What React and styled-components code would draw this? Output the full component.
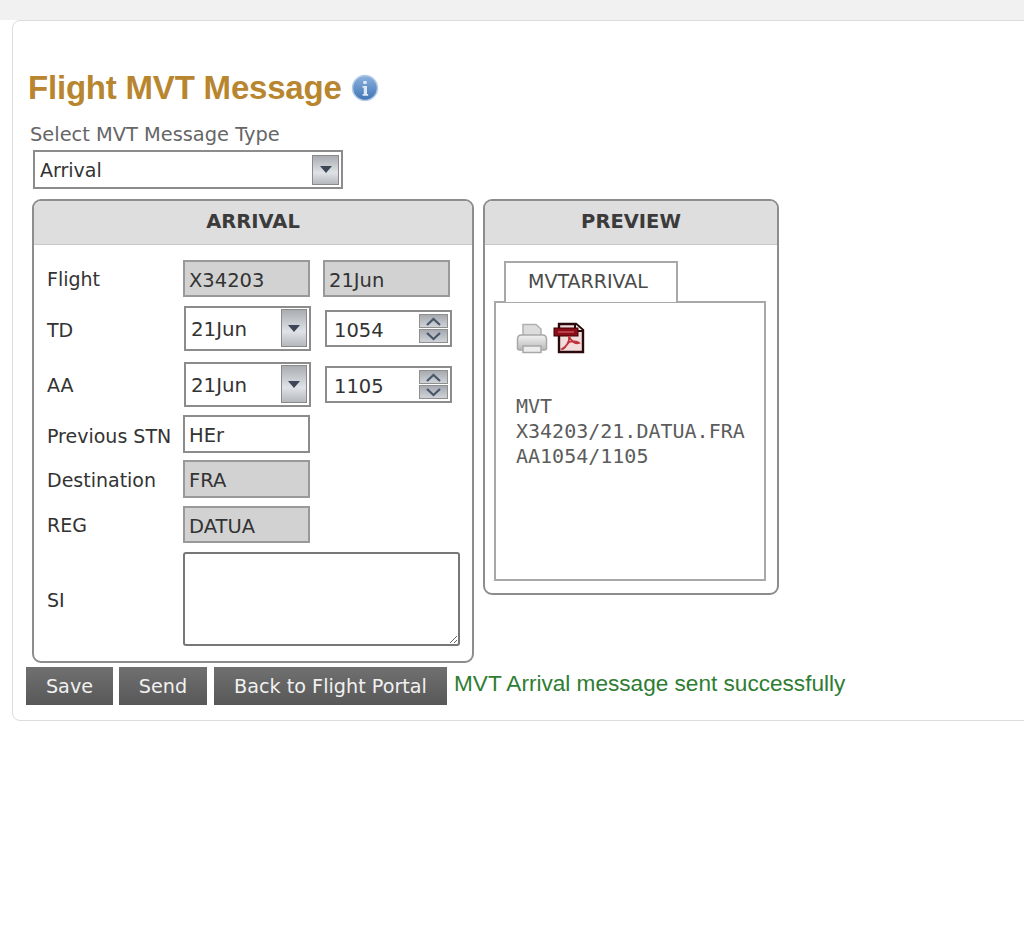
import React from 'react';
import styled, { createGlobalStyle } from 'styled-components';

const GlobalStyle = createGlobalStyle`
  html, body {
    margin: 0;
    padding: 0;
    background: #fff;
    overflow: hidden;
  }
  body {
    font-family: "DejaVu Sans", sans-serif;
    font-size: 19px;
    color: #333;
  }
`;

const TopBand = styled.div`
  height: 20px;
  background: #f1f1f1;
`;

const Page = styled.div`
  width: 1024px;
  height: 925px;
  overflow: hidden;
  background: #fff;
`;

const Card = styled.main`
  box-sizing: border-box;
  width: 1030px;
  height: 701px;
  margin-left: 12px;
  padding: 47px 0 0 14px;
  background: #fff;
  border: 1px solid #dcdcdc;
  border-radius: 8px;
`;

const TitleRow = styled.div`
  display: flex;
  align-items: center;
  gap: 9px;
  height: 40px;
  margin-left: 1px;
`;

const Title = styled.h1`
  margin: 0;
  font: bold 33px "Liberation Sans", Arial, sans-serif;
  letter-spacing: -0.2px;
  color: #b8862f;
`;

const TypeLabel = styled.div`
  margin: 15px 0 0 3px;
  height: 24px;
  line-height: 24px;
  font-size: 19.4px;
  color: #666;
`;

const TypeSelect = styled.div`
  box-sizing: border-box;
  display: flex;
  align-items: center;
  justify-content: space-between;
  width: 310px;
  height: 39px;
  margin: 3px 0 0 6px;
  padding: 3px 2px 2px 5px;
  border: 2px solid #8c8c8c;
  color: #333;
`;

const ArrowButton = styled.span`
  box-sizing: border-box;
  display: flex;
  align-items: center;
  justify-content: center;
  width: ${p => p.$wide ? 27 : 26}px;
  height: 100%;
  margin-top: ${p => p.$wide ? -1 : 0}px;
  border: 1px solid #8a8a8a;
  background: linear-gradient(#a9acb0, #dfe3e8 60%, #b5b8bc);
`;

const Arrow = styled.i`
  width: 0;
  height: 0;
  border-left: 6px solid transparent;
  border-right: 6px solid transparent;
  border-top: 7px solid #3d4655;
`;

const Panels = styled.div`
  display: flex;
  align-items: flex-start;
  gap: 9px;
  margin: 10px 0 0 5px;
`;

const Panel = styled.section`
  box-sizing: border-box;
  width: ${p => p.$width}px;
  height: ${p => p.$height}px;
  border: 2px solid #8d8d8d;
  border-radius: 9px;
  overflow: hidden;
`;

const PanelHeader = styled.header`
  height: 44px;
  line-height: 42px;
  text-align: center;
  font-weight: bold;
  font-size: 19.5px;
  color: #3b3b3b;
  background: #dedede;
  border-bottom: 1px solid #c8c8c8;
  box-sizing: border-box;
`;

const Form = styled.div`
  padding: 15px 0 0 13px;
`;

const Row = styled.div`
  display: flex;
  align-items: center;
  margin-top: ${p => p.$top || 0}px;
`;

const Label = styled.label`
  flex: none;
  width: 136px;
  color: #333;
  position: relative;
  top: ${p => p.$shift ?? 0}px;
`;

const Field = styled.input`
  box-sizing: border-box;
  width: 127px;
  height: ${p => p.$height || 37}px;
  margin-left: ${p => p.$left || 0}px;
  padding: 3px 4px 0;
  border: 2px solid ${p => p.readOnly && p.$grey ? '#999' : '#8c8c8c'};
  border-radius: 0;
  outline: none;
  font: 19.5px "DejaVu Sans", sans-serif;
  color: #333;
  background: ${p => p.$grey ? '#d2d2d2' : '#fff'};
`;

const DateSelect = styled.div`
  box-sizing: border-box;
  display: flex;
  align-items: center;
  justify-content: space-between;
  width: 127px;
  height: 45px;
  margin-left: 1px;
  padding: 1px 2px 2px 5px;
  border: 2px solid #8c8c8c;
  font-size: 19.8px;
  color: #333;
`;

const DateValue = styled.span`
  padding-top: 3px;
`;

const TimeField = styled.div`
  box-sizing: border-box;
  display: flex;
  align-items: center;
  justify-content: space-between;
  width: 127px;
  height: 37px;
  margin-left: 14px;
  padding: 2px 2px 2px 7px;
  border: 2px solid #8c8c8c;
  font-size: 19.5px;
  color: #333;
`;

const TimeValue = styled.span`
  padding-top: 3px;
`;

const Spinner = styled.span`
  display: flex;
  flex-direction: column;
  gap: 1px;
  width: 29px;
  height: 29px;
`;

const SpinButton = styled.span`
  flex: 1;
  display: flex;
  align-items: center;
  justify-content: center;
  background: linear-gradient(#a6aab0, #cfd3d8);
  border: 1px solid #8f8f8f;
`;

const Remarks = styled.textarea`
  box-sizing: border-box;
  display: block;
  width: 277px;
  height: 94px;
  padding: 4px;
  border: 2px solid #777;
  border-radius: 3px;
  outline: none;
  background: #fff;
`;

const TabArea = styled.div`
  padding: 16px 11px 0 9px;
`;

const Tab = styled.div`
  box-sizing: border-box;
  width: 174px;
  height: 41px;
  margin: 0 0 -1px 10px;
  line-height: 36px;
  padding-left: 22px;
  border: 2px solid #a8a8a8;
  border-bottom: none;
  background: #fff;
  color: #4a4a4a;
  position: relative;
  z-index: 1;
`;

const TabBody = styled.div`
  box-sizing: border-box;
  height: 280px;
  padding: 19px 0 0 20px;
  border: 2px solid #a8a8a8;
`;

const IconRow = styled.div`
  display: flex;
  align-items: center;
  gap: 5px;
  height: 32px;
`;

const Preview = styled.pre`
  margin: 40px 0 0;
  font: 20px/25px "DejaVu Sans Mono", monospace;
  color: #5c5c5c;
`;

const Actions = styled.div`
  display: flex;
  align-items: center;
  margin: 4px 0 0 -1px;
`;

const Button = styled.button`
  box-sizing: border-box;
  height: 38px;
  width: ${p => p.$width}px;
  margin-right: ${p => p.$right || 0}px;
  padding: 0;
  border: none;
  background: linear-gradient(#707070, #585858);
  color: #f1f1f1;
  font: 19.2px "DejaVu Sans", sans-serif;
`;

const Status = styled.span`
  margin: -5px 0 0 7px;
  font: 22.6px "Liberation Sans", Arial, sans-serif;
  color: #2e7d32;
`;

function InfoIcon() {
  return (
    <svg width="28" height="28" viewBox="0 0 28 28">
      <defs>
        <linearGradient id="info" x1="0" y1="0" x2="0" y2="1">
          <stop offset="0" stopColor="#8db2de" />
          <stop offset="1" stopColor="#3f74b5" />
        </linearGradient>
      </defs>
      <circle cx="14" cy="14" r="12.5" fill="url(#info)" stroke="#b5cbe6" strokeWidth="1.5" />
      <rect x="12.2" y="7" width="3.6" height="3" rx="1" fill="#dfe9f5" />
      <path d="M11.5 12h4.5v8h1.2v1.8h-5.6V20h1.2v-6.2h-1.3z" fill="#dfe9f5" />
    </svg>
  );
}

function PrinterIcon() {
  return (
    <svg width="32" height="32" viewBox="0 0 32 32">
      <defs>
        <linearGradient id="printer" x1="0" y1="0" x2="0" y2="1">
          <stop offset="0" stopColor="#f2f2f2" />
          <stop offset="1" stopColor="#b9b9b9" />
        </linearGradient>
      </defs>
      <path d="M7 15V2.5h13l5 4.5v8z" fill="#dcdcdc" stroke="#b0b0b0" strokeWidth="1.5" />
      <path d="M1.5 17q0-4 4-4h21q4 0 4 4v9q0 2-2 2h-25q-2 0-2-2z" fill="url(#printer)" stroke="#a8a8a8" strokeWidth="1.5" />
      <path d="M7 24h18v6.5H7z" fill="#ececec" stroke="#a8a8a8" strokeWidth="1.5" />
    </svg>
  );
}

function PdfIcon() {
  return (
    <svg width="32" height="32" viewBox="0 0 32 32">
      <path d="M6 2h17l7 6v22H6z" fill="#f3dcdc" stroke="#2a0a0c" strokeWidth="2.4" />
      <path d="M22 2v7h8" fill="#fff" stroke="#2a0a0c" strokeWidth="2" />
      <rect x="1" y="6" width="24" height="8" fill="#8d0d18" stroke="#3c0509" />
      <path d="M5 10h16" stroke="#c9505a" strokeWidth="1.5" />
      <path d="M16 14c1 6-3 11-7 13 2 1 4-4 7-7 3-1 8-1 10 1-3 1-8-1-10-7z" fill="none" stroke="#c0323c" strokeWidth="1.8" />
    </svg>
  );
}

function SpinArrow({ up }) {
  return (
    <svg width="17" height="9" viewBox="0 0 17 9">
      <path d={up ? 'M2 8l6.5-6 6.5 6' : 'M2 1l6.5 6 6.5-6'} fill="none" stroke="#47566b" strokeWidth="2.2" />
    </svg>
  );
}

function DateControl({ value }) {
  return (
    <DateSelect>
      <DateValue>{value}</DateValue>
      <ArrowButton><Arrow /></ArrowButton>
    </DateSelect>
  );
}

function TimeControl({ value }) {
  return (
    <TimeField>
      <TimeValue>{value}</TimeValue>
      <Spinner>
        <SpinButton><SpinArrow up /></SpinButton>
        <SpinButton><SpinArrow /></SpinButton>
      </Spinner>
    </TimeField>
  );
}

export default function App() {
  return (
    <Page>
      <GlobalStyle />
      <TopBand />
      <Card>
        <TitleRow>
          <Title>Flight MVT Message</Title>
          <InfoIcon />
        </TitleRow>
        <TypeLabel>Select MVT Message Type</TypeLabel>
        <TypeSelect>
          Arrival
          <ArrowButton $wide><Arrow /></ArrowButton>
        </TypeSelect>
        <Panels>
          <Panel $width={442} $height={464}>
            <PanelHeader>ARRIVAL</PanelHeader>
            <Form>
              <Row>
                <Label>Flight</Label>
                <Field $grey readOnly value="X34203" />
                <Field $grey $left={13} readOnly value="21Jun" />
              </Row>
              <Row $top={9}>
                <Label $shift={1}>TD</Label>
                <DateControl value="21Jun" />
                <TimeControl value="1054" />
              </Row>
              <Row $top={11}>
                <Label>AA</Label>
                <DateControl value="21Jun" />
                <TimeControl value="1105" />
              </Row>
              <Row $top={8}>
                <Label $shift={2}>Previous STN</Label>
                <Field $height={38} readOnly value="HEr" />
              </Row>
              <Row $top={7}>
                <Label $shift={1}>Destination</Label>
                <Field $grey $height={38} readOnly value="FRA" />
              </Row>
              <Row $top={8}>
                <Label>REG</Label>
                <Field $grey readOnly value="DATUA" />
              </Row>
              <Row $top={9}>
                <Label $shift={1}>SI</Label>
                <Remarks />
              </Row>
            </Form>
          </Panel>
          <Panel $width={296} $height={396}>
            <PanelHeader>PREVIEW</PanelHeader>
            <TabArea>
              <Tab>MVTARRIVAL</Tab>
              <TabBody>
                <IconRow>
                  <PrinterIcon />
                  <PdfIcon />
                </IconRow>
                <Preview>{'MVT\nX34203/21.DATUA.FRA\nAA1054/1105'}</Preview>
              </TabBody>
            </TabArea>
          </Panel>
        </Panels>
        <Actions>
          <Button $width={87} $right={6}>Save</Button>
          <Button $width={88} $right={7}>Send</Button>
          <Button $width={233}>Back to Flight Portal</Button>
          <Status>MVT Arrival message sent successfully</Status>
        </Actions>
      </Card>
    </Page>
  );
}
